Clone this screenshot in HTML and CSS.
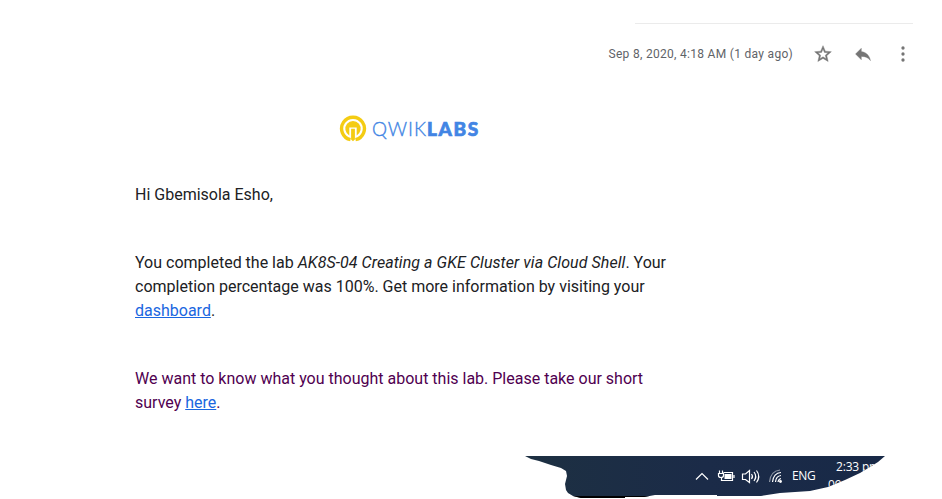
FILE: index.html
```html
<!DOCTYPE html>
<html lang="en">
<head>
<meta charset="utf-8">
<title>Qwiklabs</title>
<link rel="stylesheet" href="styles.css">
</head>
<body>
<header class="meta">
  <time class="date">Sep 8, 2020, 4:18 AM (1 day ago)</time>
  <svg class="icon" viewBox="0 0 24 24"><path d="M22 9.24l-7.19-.62L12 2 9.19 8.63 2 9.24l5.46 4.73L5.82 21 12 17.27 18.18 21l-1.63-7.03L22 9.24zM12 15.4l-3.76 2.27 1-4.28-3.32-2.88 4.38-.38L12 6.1l1.71 4.04 4.38.38-3.32 2.88 1 4.28L12 15.4z" stroke="#757575" stroke-width=".5"/></svg>
  <svg class="icon" viewBox="0 0 24 24"><path d="M10 9V5l-7 7 7 7v-4.100c5 0 8.500 1.600 11 5.100-1-5-4-10-11-11z" stroke="#757575" stroke-width=".4"/></svg>
  <svg class="icon" viewBox="0 0 24 24"><circle cx="12" cy="4.800" r="2"/><circle cx="12" cy="12" r="2"/><circle cx="12" cy="19.200" r="2"/></svg>
</header>
<main class="message">
  <div class="logo">
    <svg class="mark" viewBox="0 0 28 28"><path d="M11.500 24.700A11.400 11.400 0 1 1 16.500 24.700" fill="none" stroke="#f4cc13" stroke-width="3.400"/><path d="M10.300 20.400A7.700 7.700 0 1 1 17.700 20.400V12.600H10.300Z" fill="#f4cc13"/><path d="M12.100 13.800h3.800v10.800l-1.900 1.600-1.900-1.600Z" fill="#f4cc13"/></svg>
    <span class="word"><span class="thin">QWIK</span><b>LABS</b></span>
  </div>
  <p>Hi Gbemisola Esho,</p>
  <p>You completed the lab <em>AK8S-04 Creating a GKE Cluster via Cloud Shell</em>. Your<br>completion percentage was 100%. Get more information by visiting your<br><a href="#">dashboard</a>.</p>
  <p class="survey">We want to know what you thought about this lab. Please take our short<br>survey <a href="#">here</a>.</p>
</main>
<footer class="taskbar">
  <svg class="tray" viewBox="0 0 90 16"><g fill="none" stroke="#fff" stroke-width="1.200">
    <path d="M1 11.500L7 5.500l6 6"/>
    <path d="M28.500 4.500H37.500V12.500H26.500V10M39 7v3M24.500 2.500v3M27.500 2.500v3M23.500 5.500h5v2q0 2-2.500 2t-2.500-2z"/>
    <path d="M47.500 6h3l4-3.500v12L50.500 11.500h-3zM56.500 6q2 2.500 0 5M59 4q3.500 4.500 0 9M61.500 2.500q4.500 6 0 12"/>
    <path d="M77.500 14Q78.500 5 86 4.500M80.500 14Q81 8 86 7.500M83 14Q83.500 11 86 10.500"/>
    <path d="M74.500 14Q75.500 3 85 2" opacity=".5"/></g>
    <path d="M29.500 6h7v5h-7z" fill="#fff"/><circle cx="85.500" cy="13.500" r="1.400" fill="#fff"/></svg>
  <span class="lang">ENG</span>
  <div class="clock"><span>2:33 pm</span><span>09/09/2020</span></div>
</footer>
</body>
</html>
```

FILE: styles.css
```css
* { box-sizing: border-box; }
body {
  margin: 0;
  width: 942px;
  height: 499px;
  overflow: hidden;
  display: flex;
  flex-direction: column;
  background: #fff;
  font-family: Roboto, sans-serif;
}
.meta {
  flex: none;
  align-self: flex-end;
  width: 307px;
  height: 50px;
  margin: 23px 29px 0 0;
  padding-top: 21px;
  display: flex;
  align-items: flex-start;
  gap: 20px;
  background: linear-gradient(#ebebeb, #ebebeb) 29px 0 / 278px 1px no-repeat;
}
.date {
  flex: none;
  width: 185px;
  margin: 1px 0 0 2.500px;
  font-size: 12px;
  line-height: 18px;
  letter-spacing: .3px;
  white-space: nowrap;
  color: #5f6368;
}
.icon { width: 20px; height: 20px; flex: none; fill: #757575; }
.icon:nth-of-type(1) { margin-left: -.5px; }
.message {
  flex: none;
  width: 550px;
  height: 383px;
  margin-left: 135px;
  padding-top: 42px;
  font-size: 16px;
  line-height: 24px;
  color: #202124;
}
.logo {
  display: flex;
  align-items: center;
  height: 28px;
  margin: 0 0 40px 204px;
}
.mark { width: 28px; height: 28px; margin-right: 5px; }
.word {
  font: 19px/27px Lato, sans-serif;
  height: 28px;
  color: #4285e4;
  white-space: nowrap;
}
.thin { font-weight: 300; letter-spacing: .9px; -webkit-text-stroke: .35px #4285e4; }
.word b { font-weight: 900; letter-spacing: 1.700px; -webkit-text-stroke: .7px #4285e4; }
.message p { margin: 0 0 44px; white-space: nowrap; }
.message em { letter-spacing: .06px; }
.message .survey { color: #500050; }
.message a { color: #1a66e0; text-decoration: underline; }
.taskbar {
  flex: none;
  height: 43px;
  margin-left: 525px;
  width: 361px;
  padding-left: 170px;
  display: flex;
  align-items: flex-start;
  background: linear-gradient(#000, #000) 40px 40px / 90px 3px no-repeat, linear-gradient(90deg, #1d3042, #1b2b48 50%, #182947);
  clip-path: polygon(0 0, 360px 0, 353px 6px, 345px 11px, 335px 17px, 320px 24px, 303px 31px, 285px 35px, 255px 37px, 236px 40px, 192px 40px, 192px 39px, 130px 39px, 119px 41px, 100px 41px, 100px 42px, 56px 42px, 48px 40px, 43px 37px, 41px 34px, 40px 28px, 42px 20px, 41px 15px, 36px 12px, 26px 9px, 14px 5px, 6px 3px);
  color: #fff;
  font: 12px/16px "Open Sans", sans-serif;
}
.tray { width: 90px; height: 16px; margin-top: 12px; flex: none; }
.lang { width: 24px; margin: 12px 0 0 7px; letter-spacing: -.3px; }
.clock {
  display: flex;
  flex-direction: column;
  align-items: flex-end;
  flex: none;
  width: 70px;
  margin: 3px 0 0 -6px;
  gap: 2px;
  letter-spacing: -.2px;
}
.clock span:last-child { align-self: flex-start; margin-left: 18px; }
```
